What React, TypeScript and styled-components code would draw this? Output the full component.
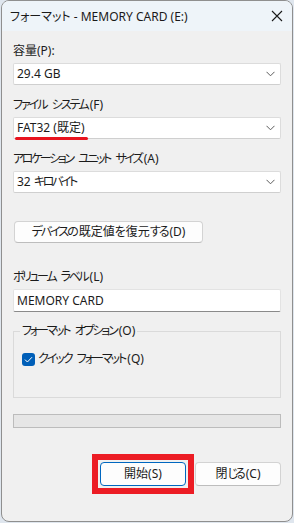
import React from "react";
import styled, { createGlobalStyle } from "styled-components";

const Global = createGlobalStyle`
  html, body { margin: 0; padding: 0; background: #dfe6ee; }
  body {
    font-family: "Noto Sans", "Noto Sans CJK JP", sans-serif;
    font-size: 12px;
    color: #1b1b1b;
    font-feature-settings: "palt";
  }
  #root { width: 294px; height: 523px; }
  * { box-sizing: border-box; }
`;

const Window = styled.div`
  margin-left: 1px;
  width: 292px;
  height: 522px;
  border: 1px solid #8f8f8f;
  border-radius: 8px;
  background: #f0f0f0;
  overflow: hidden;
  display: flex;
  flex-direction: column;
`;

const TitleBar = styled.div`
  height: 30px;
  flex: none;
  background: #eef4f9;
  display: flex;
  align-items: center;
  justify-content: space-between;
  padding: 0 8px 0 8px;
`;

const Title = styled.div`
  font-size: 12px;
  line-height: 16px;
  color: #1a1a1a;
  margin-top: 1px;
`;

const CloseIcon = styled.svg`
  width: 12px;
  height: 12px;
  margin-right: 1px;
`;

const Content = styled.div`
  padding: 12px 11px 0 11px;
  display: flex;
  flex-direction: column;
`;

const Label = styled.div`
  line-height: 16px;
  height: 16px;
  margin-bottom: 4px;
  white-space: nowrap;
`;

const Field = styled.div<{ $mb: number }>`
  display: flex;
  flex-direction: column;
  margin-bottom: ${(p) => p.$mb}px;
`;

const Select = styled.div`
  height: 22px;
  background: #fff;
  border: 1px solid #dcdcdc;
  border-bottom-color: #cfcfcf;
  border-radius: 2px;
  display: flex;
  align-items: center;
  justify-content: space-between;
  padding: 0 5px 0 3px;
  line-height: 16px;
`;

const Kana = styled.span<{ $ls: number }>`
  letter-spacing: ${(p) => p.$ls}px;
`;

const Chevron = styled.svg`
  width: 9px;
  height: 6px;
`;

const Marked = styled.span`
  position: relative;
  &::after {
    content: "";
    position: absolute;
    left: -2px;
    right: -3px;
    bottom: -4px;
    height: 3px;
    border-radius: 2px;
    background: #e8141f;
  }
`;

const Button = styled.button<{ $primary?: boolean }>`
  font: inherit;
  font-size: 12px;
  color: #1b1b1b;
  background: #fdfdfd;
  border: 1px solid ${(p) => (p.$primary ? "#0067c0" : "#d3d3d3")};
  border-bottom-color: ${(p) => (p.$primary ? "#0067c0" : "#bdbdbd")};
  border-radius: 4px;
  padding: 0;
  line-height: 16px;
  display: flex;
  align-items: center;
  justify-content: center;
  white-space: pre;
`;

const RestoreButton = styled(Button)`
  width: 189px;
  height: 22px;
  margin-left: 1px;
  margin-bottom: 26px;
`;

const Input = styled.div`
  height: 23px;
  background: #fff;
  border: 1px solid #e3e3e3;
  border-bottom-color: #8a8a8a;
  border-radius: 2px;
  padding: 0 3px;
  display: flex;
  align-items: center;
  line-height: 16px;
`;

const GroupBox = styled.fieldset`
  margin: 0 0 16px 0;
  border: 1px solid #dadada;
  padding: 0 8px 30px 8px;
  height: 75px;
`;

const Legend = styled.legend`
  padding: 0 2px;
  margin-left: -2px;
  line-height: 16px;
  height: 16px;
`;

const CheckRow = styled.label`
  display: flex;
  align-items: center;
  gap: 3px;
  line-height: 16px;
  margin-top: 12px;
`;

const CheckBox = styled.span`
  width: 13px;
  height: 13px;
  border-radius: 3px;
  background: #005fb8;
  display: flex;
  align-items: center;
  justify-content: center;
`;

const Progress = styled.div`
  height: 14px;
  border: 1px solid #bcbcbc;
  background: #e6e6e6;
  margin-bottom: 34px;
`;

const ButtonRow = styled.div`
  display: flex;
  justify-content: flex-end;
  gap: 9px;
`;

const ActionButton = styled(Button)`
  width: 86px;
  height: 24px;
`;

const Highlight = styled.div`
  position: relative;
  display: flex;
  &::after {
    content: "";
    position: absolute;
    inset: -8px;
    border: 6px solid #ec1c24;
    pointer-events: none;
  }
`;

/* Tightens kana runs (all but the last glyph) to the narrower UI-font kana widths */
const KANA = /([\u3040-\u30ff]+)/;
const JP = ({ text, ls = -2 }: { text: string; ls?: number }) => (
  <>
    {text.split(KANA).map((part, i) =>
      /^[\u3040-\u30ff]+$/.test(part) && part.length > 1 ? (
        <React.Fragment key={i}>
          <Kana $ls={ls}>{part.slice(0, -1)}</Kana>
          {part.slice(-1)}
        </React.Fragment>
      ) : (
        <React.Fragment key={i}>{part}</React.Fragment>
      )
    )}
  </>
);

const ChevronDown = () => (
  <Chevron viewBox="0 0 9 6">
    <path d="M0.5 0.8 L4.5 4.8 L8.5 0.8" fill="none" stroke="#5c5c5c" strokeWidth="1" />
  </Chevron>
);

export default function App() {
  return (
    <>
      <Global />
      <Window>
        <TitleBar>
          <Title>フォーマット - MEMORY CARD (E:)</Title>
          <CloseIcon viewBox="0 0 12 12">
            <path d="M1 1 L11 11 M11 1 L1 11" stroke="#1a1a1a" strokeWidth="1.1" fill="none" />
          </CloseIcon>
        </TitleBar>
        <Content>
          <Field $mb={12}>
            <Label>容量(P):</Label>
            <Select>
              <span>29.4 GB</span>
              <ChevronDown />
            </Select>
          </Field>
          <Field $mb={12}>
            <Label>
              <JP text="ファイル システム(F)" ls={-2} />
            </Label>
            <Select>
              <Marked>FAT32 (既定)</Marked>
              <ChevronDown />
            </Select>
          </Field>
          <Field $mb={28}>
            <Label>
              <JP text="アロケーション ユニット サイズ(A)" ls={-2.4} />
            </Label>
            <Select>
              <span>
                <JP text="32 キロバイト" ls={-2.4} />
              </span>
              <ChevronDown />
            </Select>
          </Field>
          <RestoreButton>
            <JP text="デバイスの既定値を復元する(D)" ls={-2} />
          </RestoreButton>
          <Field $mb={11}>
            <Label>
              <JP text="ボリューム ラベル(L)" ls={-2.5} />
            </Label>
            <Input>MEMORY CARD</Input>
          </Field>
          <GroupBox>
            <Legend>
              <JP text="フォーマット オプション(O)" ls={-2.2} />
            </Legend>
            <CheckRow>
              <CheckBox>
                <svg width="9" height="7" viewBox="0 0 9 7">
                  <path d="M1 3.6 L3.4 6 L8 1.2" fill="none" stroke="#fff" strokeWidth="1" />
                </svg>
              </CheckBox>
              <span>
                <JP text="クイック フォーマット(Q)" ls={-2} />
              </span>
            </CheckRow>
          </GroupBox>
          <Progress />
          <ButtonRow>
            <Highlight>
              <ActionButton $primary>開始(S)</ActionButton>
            </Highlight>
            <ActionButton>
              <JP text="閉じる(C)" ls={-3} />
            </ActionButton>
          </ButtonRow>
        </Content>
      </Window>
    </>
  );
}
